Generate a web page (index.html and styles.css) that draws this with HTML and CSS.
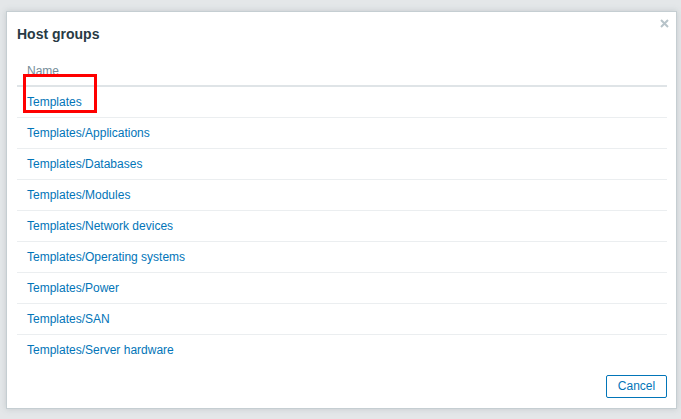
FILE: index.html
```html
<!DOCTYPE html>
<html>
<head>
<meta charset="utf-8">
<link rel="stylesheet" href="styles.css">
</head>
<body>
<div class="overlay">
  <div class="dialog">
    <button class="close" aria-label="Close">
      <svg width="9" height="9" viewBox="0 0 9 9"><path d="M1 1L8 8M8 1L1 8" stroke="#b7c3c9" stroke-width="2" fill="none"/></svg>
    </button>
    <h4 class="title">Host groups</h4>
    <div class="body">
      <table class="list">
        <thead><tr><th>Name</th></tr></thead>
        <tbody>
          <tr><td><a href="#">Templates</a></td></tr>
          <tr><td><a href="#">Templates/Applications</a></td></tr>
          <tr><td><a href="#">Templates/Databases</a></td></tr>
          <tr><td><a href="#">Templates/Modules</a></td></tr>
          <tr><td><a href="#">Templates/Network devices</a></td></tr>
          <tr><td><a href="#">Templates/Operating systems</a></td></tr>
          <tr><td><a href="#">Templates/Power</a></td></tr>
          <tr><td><a href="#">Templates/SAN</a></td></tr>
          <tr><td><a href="#">Templates/Server hardware</a></td></tr>
        </tbody>
      </table>
    </div>
    <div class="footer"><button class="btn">Cancel</button></div>
  </div>
  <div class="highlight"></div>
</div>
</body>
</html>
```
FILE: styles.css
```css
html, body {
  margin: 0;
  padding: 0;
}
body {
  background: #e4e7e9;
  font-family: "Liberation Sans", Arial, sans-serif;
  font-size: 12px;
  color: #1f2c33;
}
.overlay {
  position: relative;
  padding: 11px 4px 10px 6px;
  height: 398px;
}
.dialog {
  position: relative;
  box-sizing: border-box;
  width: 671px;
  height: 398px;
  background: #fff;
  border: 1px solid #c5ced2;
  box-shadow: 0 0 6px rgba(100, 115, 125, 0.25);
  display: flex;
  flex-direction: column;
  padding: 0 9px 10px 10px;
}
.close {
  position: absolute;
  top: 5px;
  right: 5px;
  width: 13px;
  height: 13px;
  padding: 0;
  border: 0;
  background: none;
  display: flex;
  align-items: center;
  justify-content: center;
}
.title {
  margin: 0;
  padding: 14px 0 14px;
  font-size: 14px;
  line-height: 16px;
  font-weight: bold;
  color: #283a44;
}
.body {
  flex: 1;
}
.list {
  width: 100%;
  border-collapse: collapse;
}
.list th {
  text-align: left;
  font-weight: normal;
  color: #768d99;
  height: 30px;
  padding: 0 10px;
  line-height: 14px;
  border-bottom: 2px solid #dfe4e7;
  box-sizing: border-box;
}
.list td {
  height: 30px;
  padding: 0 10px;
  line-height: 14px;
  border-bottom: 1px solid #ebeef0;
}
.list tbody tr:last-child td {
  border-bottom: 0;
}
.list a {
  color: #0275b8;
  text-decoration: none;
}
.footer {
  display: flex;
  justify-content: flex-end;
}
.btn {
  height: 23px;
  padding: 0 10px;
  width: 61px;
  border: 1px solid #0275b8;
  border-radius: 2px;
  background: #fff;
  color: #0275b8;
  font-family: "Liberation Sans", Arial, sans-serif;
  font-size: 12px;
  line-height: 21px;
}
.highlight {
  position: absolute;
  left: 23px;
  top: 74px;
  width: 68px;
  height: 33px;
  border: 3px solid #ff0000;
}
```
